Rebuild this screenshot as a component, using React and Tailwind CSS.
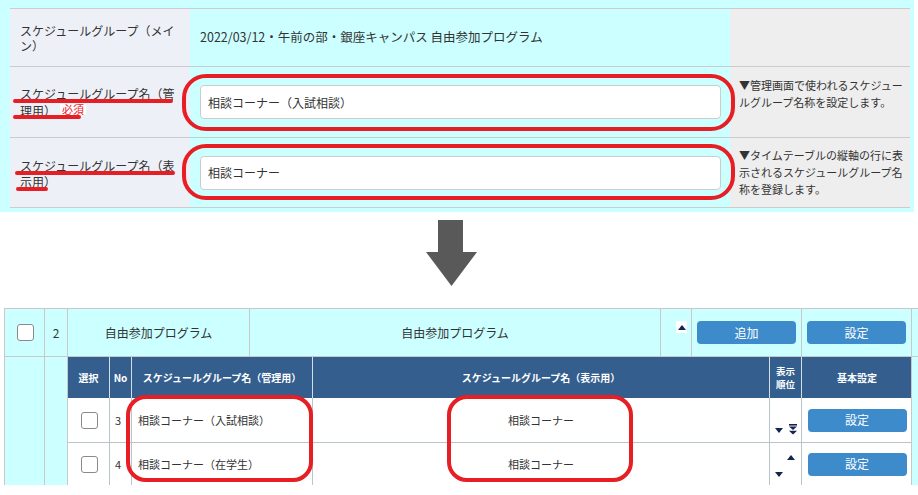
import React from 'react';

const Checkbox = ({ className = '' }) => (
  <span className={`block w-[17px] h-[17px] rounded-[3px] border border-[#8a8a8a] bg-white ${className}`} />
);

const TriDown = () => (
  <svg width="8" height="5" viewBox="0 0 8 5"><polygon points="0,0 8,0 4,5" fill="#13264f" /></svg>
);

const TriUp = () => (
  <svg width="8" height="5" viewBox="0 0 8 5"><polygon points="0,5 8,5 4,0" fill="#13264f" /></svg>
);

const ToBottom = () => (
  <svg width="8" height="11" viewBox="0 0 8 11">
    <rect x="0" y="0" width="8" height="1.6" fill="#13264f" />
    <polygon points="0,2.5 8,2.5 4,6" fill="#13264f" />
    <polygon points="0,6.8 8,6.8 4,10.5" fill="#13264f" />
  </svg>
);

const BlueButton = ({ children }) => (
  <button className="w-[99px] h-[23px] rounded-[4px] bg-[#3d8bcb] text-white text-[12px] leading-none">
    {children}
  </button>
);

const Annotation = ({ className }) => (
  <div className={`absolute border-[4px] border-[#e81e25] ${className}`} />
);

const Underline = ({ className }) => (
  <div className={`absolute h-[4px] rounded-full bg-[#e81e25] ${className}`} />
);

const rows = [
  { no: 3, admin: '相談コーナー（入試相談）', display: '相談コーナー', order: 'first' },
  { no: 4, admin: '相談コーナー（在学生）', display: '相談コーナー', order: 'last' },
];

export default function App() {
  return (
    <div className="relative w-[918px] h-[495px] overflow-hidden bg-white text-[#333] font-['Noto_Sans_CJK_JP','Liberation_Sans',sans-serif]">
      {/* before: edit form */}
      <div className="w-[914px] h-[212px] bg-[#ccffff] pt-[8px] pl-[10px]">
        <div className="w-[900px] border-t border-[#cccccc]">
          <div className="grid grid-cols-[180px_540px_180px] h-[58px] border-b border-[#cccccc]">
            <div className="bg-[#edf1f7] px-[10px] flex items-center text-[12px] leading-[15px]">
              スケジュールグループ（メイン）
            </div>
            <div className="bg-[#ccffff] pl-[10px] flex items-center text-[12.5px]">
              2022/03/12・午前の部・銀座キャンパス 自由参加プログラム
            </div>
            <div className="bg-[#eeeeee]" />
          </div>

          <div className="grid grid-cols-[180px_540px_180px] h-[71px] border-b border-[#cccccc]">
            <div className="bg-[#edf1f7] px-[10px] flex items-center text-[12px] leading-[17px]">
              <p>
                スケジュールグループ名（管理用）
                <span className="inline-block ml-[4px] px-[2px] bg-white text-[#e8202a] text-[11px] leading-[11px] align-top mt-[2px]">必須</span>
              </p>
            </div>
            <div className="bg-[#ccffff] pl-[10px] flex items-center">
              <input
                readOnly
                value="相談コーナー（入試相談）"
                className="w-[521px] h-[34px] rounded-[4px] border border-[#cccccc] bg-white px-[7px] text-[12px] outline-none"
              />
            </div>
            <div className="bg-[#eeeeee] pt-[10px] pl-[9px] pr-[3px] text-[11px] leading-[16.5px]">
              ▼管理画面で使われるスケジュールグループ名称を設定します。
            </div>
          </div>

          <div className="grid grid-cols-[180px_540px_180px] h-[70px] border-b border-[#cccccc]">
            <div className="bg-[#edf1f7] px-[10px] pt-[2px] flex items-center text-[12px] leading-[16px]">
              スケジュールグループ名（表示用）
            </div>
            <div className="bg-[#ccffff] pl-[10px] flex items-center">
              <input
                readOnly
                value="相談コーナー"
                className="w-[521px] h-[34px] rounded-[4px] border border-[#cccccc] bg-white px-[7px] text-[12px] outline-none"
              />
            </div>
            <div className="bg-[#eeeeee] pt-[9px] pl-[9px] pr-[3px] text-[11px] leading-[17px]">
              ▼タイムテーブルの縦軸の行に表示されるスケジュールグループ名称を登録します。
            </div>
          </div>
        </div>
      </div>

      {/* arrow */}
      <div className="pl-[426px] pt-[8px] h-[96px]">
        <svg width="51" height="66" viewBox="0 0 51 66">
          <polygon points="12,0 37,0 37,32 51,32 25.5,66 0,32 12,32" fill="#595959" />
        </svg>
      </div>

      {/* after: list */}
      <div className="ml-[4px] w-[914px] bg-[#ccffff]">
        <div className="grid grid-cols-[41px_23px_182px_411px_31px_110px_110px] h-[48px] border-t border-[#c8c8c8] text-[12px]">
          <div className="border-l border-r border-[#c8c8c8] flex items-center justify-center pl-[2px]">
            <Checkbox />
          </div>
          <div className="border-r border-[#c8c8c8] flex items-center justify-center">2</div>
          <div className="border-r border-[#c8c8c8] flex items-center justify-center">自由参加プログラム</div>
          <div className="border-r border-[#c8c8c8] flex items-center justify-center">自由参加プログラム</div>
          <div className="border-r border-[#c8c8c8] pt-[12px] pl-[15px]">
            <div className="w-[11px] h-[12px] bg-white flex items-center justify-center">
              <TriUp />
            </div>
          </div>
          <div className="border-r border-[#c8c8c8] flex items-center justify-center">
            <BlueButton>追加</BlueButton>
          </div>
          <div className="border-r border-[#c8c8c8] flex items-center justify-center">
            <BlueButton>設定</BlueButton>
          </div>
        </div>

        <div className="grid grid-cols-[41px_23px_844px] border-t border-[#c8c8c8]">
          <div className="border-l border-r border-[#c8c8c8]" />
          <div className="border-r border-[#c8c8c8]" />
          <div className="bg-white border-r border-[#c8c8c8]">
            <div className="grid grid-cols-[42px_22px_181px_457px_32px_110px] h-[41px] bg-[#335e8e] text-white font-bold text-[10px]">
              <div className="border-r border-[#d6dde6] flex items-center justify-center">選択</div>
              <div className="border-r border-[#d6dde6] flex items-center justify-center">No</div>
              <div className="border-r border-[#d6dde6] flex items-center justify-center">スケジュールグループ名（管理用）</div>
              <div className="border-r border-[#d6dde6] flex items-center justify-center">スケジュールグループ名（表示用）</div>
              <div className="border-r border-[#d6dde6] flex items-center justify-center text-center text-[9.5px] leading-[13px]">
                表示<br />順位
              </div>
              <div className="flex items-center justify-center">基本設定</div>
            </div>

            {rows.map((row, i) => (
              <div
                key={row.no}
                className={`grid grid-cols-[42px_22px_181px_457px_32px_110px] text-[11px] ${
                  i === 0 ? 'h-[45px] border-b border-[#b9c4cb]' : 'h-[42px]'
                }`}
              >
                <div className="border-r border-[#b9c4cb] flex items-center justify-center pl-[1px]">
                  <Checkbox />
                </div>
                <div className="border-r border-[#b9c4cb] flex items-center pl-[5px]">{row.no}</div>
                <div className="border-r border-[#b9c4cb] flex items-center pl-[6px]">{row.admin}</div>
                <div className="border-r border-[#b9c4cb] flex items-center justify-center">{row.display}</div>
                {row.order === 'first' ? (
                  <div className="border-r border-[#b9c4cb] flex items-start pt-[26px] pl-[5px]">
                    <span className="mt-[4px] flex"><TriDown /></span>
                    <span className="ml-[6px] flex"><ToBottom /></span>
                  </div>
                ) : (
                  <div className="border-r border-[#b9c4cb] flex flex-col items-start pt-[12px] pl-[5px]">
                    <span className="ml-[12px] flex"><TriUp /></span>
                    <span className="mt-[12px] flex"><TriDown /></span>
                  </div>
                )}
                <div className="flex items-center justify-center">
                  <BlueButton>設定</BlueButton>
                </div>
              </div>
            ))}
          </div>
        </div>
      </div>

      {/* red annotations */}
      <Underline className="left-[13px] top-[99px] w-[160px]" />
      <Underline className="left-[13px] top-[115px] w-[68px]" />
      <Underline className="left-[15px] top-[171px] w-[160px]" />
      <Underline className="left-[16px] top-[187px] w-[32px]" />
      <Annotation className="left-[182px] top-[74px] w-[553px] h-[57px] rounded-[24px]" />
      <Annotation className="left-[182px] top-[144px] w-[553px] h-[56px] rounded-[24px]" />
      <Annotation className="left-[126px] top-[395px] w-[187px] h-[87px] rounded-[20px]" />
      <Annotation className="left-[447px] top-[395px] w-[186px] h-[87px] rounded-[20px]" />
    </div>
  );
}
